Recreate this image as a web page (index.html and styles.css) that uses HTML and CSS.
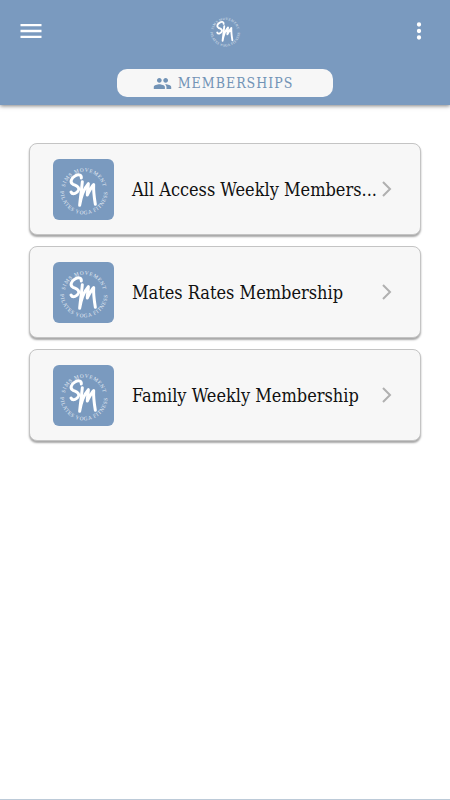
FILE: index.html
```html
<!DOCTYPE html>
<html lang="en">
<head>
<meta charset="UTF-8">
<meta name="viewport" content="width=device-width, initial-scale=1.0">
<title>Memberships</title>
<link rel="stylesheet" href="styles.css">
</head>
<body>

<!-- shared logo -->
<svg class="defs" aria-hidden="true">
    <defs>
        <path id="ring-top" d="M34 97 A59 59 0 0 1 152 97"/>
        <path id="ring-bottom" d="M22 95 A71 71 0 0 0 164 95"/>
    </defs>
    <symbol id="logo" viewBox="0 0 183 183">
        <text class="ring-text"><textPath href="#ring-top" startOffset="50%" text-anchor="middle">SIMS MOVEMENT</textPath></text>
        <text class="ring-text"><textPath href="#ring-bottom" startOffset="50%" text-anchor="middle">PILATES YOGA FITNESS</textPath></text>
        <g class="mark">
            <path d="M85 57 C86 45 74 46 66 51 C54 58 50 70 60 76 C69 80 79 82 77 92 C74 102 59 109 54 99"/>
            <path d="M88 68 C86 91 82 115 80 139 C84 113 92 90 106 74 C106 87 102 98 103 108 C109 97 114 85 122 77 C121 96 124 118 127 136"/>
        </g>
    </symbol>
</svg>

<header class="header">
    <div class="bar">
        <button class="icon-button" aria-label="Menu">
            <svg width="28" height="28" viewBox="0 0 24 24"><path d="M3 18h18v-2H3v2zm0-5h18v-2H3v2zm0-7v2h18V6H3z"/></svg>
        </button>
        <svg class="brand" role="img" aria-label="Sims Movement"><use href="#logo"/></svg>
        <button class="icon-button" aria-label="More options">
            <svg width="26" height="26" viewBox="0 0 24 24"><path d="M12 8a2 2 0 1 0 0-4 2 2 0 0 0 0 4zm0 2a2 2 0 1 0 0 4 2 2 0 0 0 0-4zm0 6a2 2 0 1 0 0 4 2 2 0 0 0 0-4z"/></svg>
        </button>
    </div>
    <button class="tab">
        <svg width="19" height="19" viewBox="0 0 24 24"><path d="M16 11c1.660 0 2.990-1.340 2.990-3S17.660 5 16 5s-3 1.340-3 3 1.340 3 3 3zm-8 0c1.660 0 2.990-1.340 2.990-3S9.660 5 8 5 5 6.340 5 8s1.340 3 3 3zm0 2c-2.330 0-7 1.170-7 3.500V19h14v-2.500c0-2.330-4.670-3.500-7-3.500zm8 0c-.29 0-.62.02-.97.050 1.160.84 1.970 1.970 1.970 3.450V19h6v-2.500c0-2.330-4.670-3.500-7-3.500z"/></svg>
        <span>MEMBERSHIPS</span>
    </button>
</header>

<main class="list">
    <a class="card" href="#">
        <svg class="thumb" aria-hidden="true"><use href="#logo"/></svg>
        <span class="name">All Access Weekly Members...</span>
        <svg class="chevron" viewBox="0 0 10 16"><path d="M1 1l7 7-7 7"/></svg>
    </a>
    <a class="card" href="#">
        <svg class="thumb" aria-hidden="true"><use href="#logo"/></svg>
        <span class="name">Mates Rates Membership</span>
        <svg class="chevron" viewBox="0 0 10 16"><path d="M1 1l7 7-7 7"/></svg>
    </a>
    <a class="card" href="#">
        <svg class="thumb" aria-hidden="true"><use href="#logo"/></svg>
        <span class="name">Family Weekly Membership</span>
        <svg class="chevron" viewBox="0 0 10 16"><path d="M1 1l7 7-7 7"/></svg>
    </a>
</main>

</body>
</html>
```

FILE: styles.css
```css
* {
    box-sizing: border-box;
}

body {
    margin: 0;
    min-height: 100vh;
    background-color: #fff;
    border-bottom: 1px solid #bccad8;
    font-family: "DejaVu Serif Condensed", "DejaVu Serif", serif;
}

button {
    border: 0;
    font-family: inherit;
    cursor: pointer;
}

.defs {
    position: absolute;
    width: 0;
    height: 0;
}

.header {
    display: flex;
    flex-direction: column;
    align-items: center;
    gap: 8px;
    padding-bottom: 8px;
    background-color: #7a9abf;
    box-shadow: 0 1px 4px rgba(0, 0, 0, 0.5);
}

.bar {
    display: flex;
    justify-content: space-between;
    align-items: center;
    width: 100%;
    height: 61px;
    padding: 0 16px;
}

.icon-button {
    display: flex;
    justify-content: center;
    align-items: center;
    width: 30px;
    height: 30px;
    padding: 0;
    background: none;
    fill: #fff;
}

.brand {
    width: 38px;
    height: 38px;
}

.ring-text {
    font-family: "Liberation Serif", serif;
    font-size: 16px;
    letter-spacing: 2px;
    fill: #e6edf5;
}

.mark {
    fill: none;
    stroke: #fff;
    stroke-width: 9;
    stroke-linecap: round;
    stroke-linejoin: round;
}

.tab {
    display: flex;
    justify-content: center;
    align-items: center;
    gap: 6px;
    width: 48%;
    height: 28px;
    padding: 0 4px 0 0;
    border-radius: 10px;
    background-color: #f7f7f7;
    color: #7293b6;
    fill: #7293b6;
    font-size: 14px;
    letter-spacing: 1px;
}

.list {
    display: flex;
    flex-direction: column;
    gap: 11px;
    padding: 38px 29px;
}

.card {
    display: flex;
    align-items: center;
    height: 92px;
    padding: 0 28px 0 23px;
    border: 1px solid #c4c4c4;
    border-radius: 8px;
    background-color: #f7f7f7;
    box-shadow: 0 2px 2px rgba(0, 0, 0, 0.35);
    color: #111;
    font-size: 18px;
    text-decoration: none;
}

.thumb {
    flex: none;
    width: 61px;
    height: 61px;
    margin-right: 18px;
    border-radius: 6px;
    background-color: #7a9abf;
}

.name {
    flex: 1;
    min-width: 0;
    margin-right: 2px;
    white-space: nowrap;
}

.chevron {
    flex: none;
    width: 10px;
    height: 16px;
    fill: none;
    stroke: #b0b0b0;
    stroke-width: 2;
}
```
